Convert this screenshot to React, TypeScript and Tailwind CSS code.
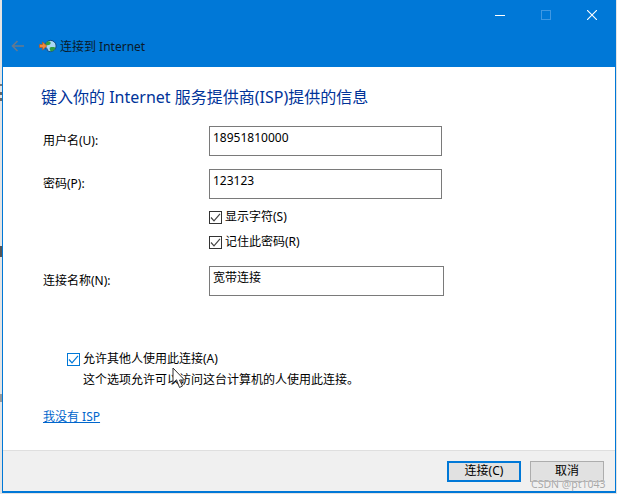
import React from 'react';

const font = "font-['Noto_Sans','Noto_Sans_CJK_SC',sans-serif]";

const CheckBox = ({ active = false }: { active?: boolean }) => (
  <span className={`flex h-[13px] w-[13px] shrink-0 items-center justify-center border bg-white ${active ? 'border-[#0078d7]' : 'border-[#333333]'}`}>
    <svg width="11" height="11" viewBox="0 0 11 11" fill="none">
      <path d="M1 5.5 L4 8.8 L10 1.8" stroke={active ? '#0078d7' : '#444444'} strokeWidth="1.2" />
    </svg>
  </span>
);

const Field = ({ label, value, wide = false }: { label: string; value: string; wide?: boolean }) => (
  <div className="flex items-center">
    <label className="w-[166px] text-[12px] leading-[16px] text-black">{label}</label>
    <div className={`h-[30px] border border-[#7a7a7a] bg-white pl-[3px] pt-[3px] text-[12px] leading-[16px] text-black ${wide ? 'w-[235px]' : 'w-[233px]'}`}>
      {value}
    </div>
  </div>
);

const InternetIcon = () => (
  <svg width="18" height="16" viewBox="0 0 18 16">
    <circle cx="11.5" cy="8" r="5.6" fill="#a9d8f5" stroke="#0f3f74" strokeWidth="0.9" />
    <path d="M8 3.8 C10 2.8 12 3.6 11.6 5.6 C11 7.8 8.5 7.2 6.6 7.2 C6.4 5.8 7 4.6 8 3.8Z" fill="#2f9e44" />
    <path d="M10.8 9.4 C13 8.6 15.6 8.8 16.6 9.6 C16 12 14 13.4 12.2 13.4 C10.8 12.4 10.4 10.8 10.8 9.4Z" fill="#2f9e44" />
    <path d="M7 9 C8 9.5 9 11 9.6 12.8 C8 12.4 6.6 10.8 6.4 9Z" fill="#1c68b4" />
    <path d="M0.5 6.5 H3.5 V4 L7.8 8 L3.5 12 V9.5 H0.5 Z" fill="#f48a3a" stroke="#b5531b" strokeWidth="0.7" />
  </svg>
);

const App = () => {
  return (
    <div className={`relative h-[494px] w-[617px] overflow-hidden bg-[#e4e4e4] pb-[1px] pl-[2px] pr-[1px] ${font}`}>
      <div className="flex h-full flex-col bg-[#0078d7] pb-[2px] pl-[1px] pr-[1px]">
        {/* title bar */}
        <div className="-ml-[1px] flex h-[67px] shrink-0 flex-col">
          <div className="flex h-[31px] items-start justify-end">
            <div className="mr-[36px] mt-[15px] h-[1px] w-[10px] bg-white" />
            <div className="mr-[36px] mt-[10px] h-[10px] w-[10px] border border-[#3f98e3]" />
            <svg className="mr-[18px] mt-[10px]" width="10" height="10" viewBox="0 0 10 10">
              <path d="M0 0 L10 10 M10 0 L0 10" stroke="white" strokeWidth="1.1" />
            </svg>
          </div>
          <div className="flex h-[30px] items-center">
            <svg className="ml-[9px]" width="14" height="12" viewBox="0 0 14 12" fill="none">
              <path d="M13 6 H2 M6.5 1 L1.5 6 L6.5 11" stroke="#65798f" strokeWidth="1.6" />
            </svg>
            <div className="ml-[14px]">
              <InternetIcon />
            </div>
            <span className="ml-[3px] mt-[2px] text-[12px] leading-[16px] text-[#0a1a2a]">连接到 Internet</span>
          </div>
        </div>

        {/* content */}
        <div className="flex min-h-0 flex-1 flex-col bg-white pl-[40px]">
          <h1 className="-ml-[2px] mt-[20px] text-[16px] font-normal leading-[21px] text-[#003399]">键入你的 Internet 服务提供商(ISP)提供的信息</h1>
          <div className="mt-[18px]">
            <Field label="用户名(U):" value="18951810000" />
          </div>
          <div className="mt-[13px]">
            <Field label="密码(P):" value="123123" />
          </div>
          <div className="ml-[166px] mt-[10px] flex items-center gap-[3px] text-[12px] leading-[16px] text-black">
            <CheckBox />
            <span>显示字符(S)</span>
          </div>
          <div className="ml-[166px] mt-[9px] flex items-center gap-[3px] text-[12px] leading-[16px] text-black">
            <CheckBox />
            <span>记住此密码(R)</span>
          </div>
          <div className="mt-[16px]">
            <Field label="连接名称(N):" value="宽带连接" wide />
          </div>
          <div className="ml-[24px] mt-[55px] flex items-center gap-[3px] text-[12px] leading-[16px] text-black">
            <CheckBox active />
            <span>允许其他人使用此连接(A)</span>
          </div>
          <p className="ml-[40px] mt-[5px] text-[12px] leading-[16px] text-black">这个选项允许可以访问这台计算机的人使用此连接。</p>
          <a className="mt-[21px] w-fit text-[12px] leading-[16px] text-[#0066cc] underline">我没有 ISP</a>
        </div>

        {/* footer */}
        <div className="flex h-[41px] shrink-0 items-center justify-end gap-[9px] border-t border-[#dfdfdf] bg-[#f0f0f0] pr-[11px]">
          <button className="h-[21px] w-[74px] border-2 border-[#0078d7] bg-[#e1e1e1] text-[12px] leading-[16px] text-black">连接(C)</button>
          <button className="h-[21px] w-[74px] border border-[#adadad] bg-[#e1e1e1] text-[12px] leading-[16px] text-black">取消</button>
        </div>
      </div>

      {/* bits of the window behind, along the left edge */}
      <div className="absolute left-0 top-[84px] h-[2px] w-[2px] bg-[#777777]" />
      <div className="absolute left-0 top-[92px] h-[3px] w-[2px] bg-[#666666]" />
      <div className="absolute left-0 top-[98px] h-[3px] w-[2px] bg-[#666666]" />
      <div className="absolute left-0 top-[246px] h-[11px] w-[2px] bg-[#555555]" />
      <div className="absolute left-0 top-[394px] h-[8px] w-[2px] bg-[#999999]" />

      {/* watermark */}
      <span className="absolute left-[531px] top-[478px] text-[10.5px] leading-[12px] text-[#a8a8a8] [text-shadow:0_0_1px_#ffffff]">CSDN @pt1043</span>

      {/* mouse pointer */}
      <svg className="absolute left-[172px] top-[367px]" width="14" height="22" viewBox="0 0 14 22">
        <path d="M1 1 L1 16 L4.5 12.8 L7.5 20.5 L10.5 19 L7.5 13 L12.5 13 Z" fill="white" stroke="#333333" strokeWidth="1" />
      </svg>
    </div>
  );
};

export default App;
